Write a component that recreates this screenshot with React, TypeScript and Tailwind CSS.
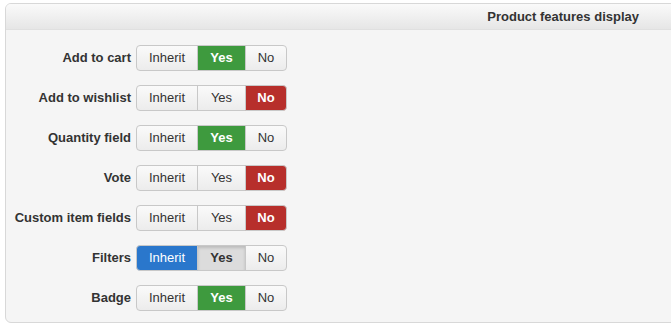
import React from "react";

type Val = "inherit" | "yes" | "no";
type Row = { label: string; active: Val; filters?: boolean };

const rows: Row[] = [
  { label: "Add to cart", active: "yes" },
  { label: "Add to wishlist", active: "no" },
  { label: "Quantity field", active: "yes" },
  { label: "Vote", active: "no" },
  { label: "Custom item fields", active: "no" },
  { label: "Filters", active: "inherit", filters: true },
  { label: "Badge", active: "yes" },
];

const base =
  "h-[26px] flex items-center justify-center text-[13px] border border-[#c8c8c8] -ml-px first:ml-0 first:rounded-l-[4px] last:rounded-r-[4px]";
const normal = "bg-gradient-to-b from-[#fafafa] to-[#ececec] text-[#333]";

function Group({ row }: { row: Row }) {
  const cls = (v: Val, w: string) => {
    if (row.active === v) {
      if (v === "yes")
        return `${base} ${w} bg-[#3e9a3e] border-[#2f7f2f] text-white font-bold relative z-10`;
      if (v === "no")
        return `${base} ${w} bg-[#b72f2b] border-[#9a2421] text-white font-bold relative z-10`;
      return `${base} ${w} bg-[#2a77cc] border-[#1f62ad] text-white relative z-10`;
    }
    if (row.filters && v === "yes")
      return `${base} ${w} bg-[#dcdcdc] text-[#333] font-bold shadow-[inset_0_2px_3px_rgba(0,0,0,0.15)] border-[#b8b8b8]`;
    return `${base} ${w} ${normal}`;
  };
  return (
    <div className="flex">
      <div className={cls("inherit", "w-[62px]")}>Inherit</div>
      <div className={cls("yes", "w-[49px]")}>Yes</div>
      <div className={cls("no", "w-[42px]")}>No</div>
    </div>
  );
}

export default function App() {
  return (
    <div
      className="w-[671px] h-[331px] bg-white overflow-hidden pt-[3px] pl-[5px]"
      style={{ fontFamily: '"Liberation Sans", Arial, sans-serif' }}
    >
      <div className="w-[700px] h-[320px] border border-[#d8d8d8] rounded-[6px] bg-[#f5f5f5] overflow-hidden">
        <div className="h-[26px] bg-gradient-to-b from-[#fafafa] to-[#e6e6e6] border-b border-[#e0e0e0] flex items-center justify-end pr-[65px]">
          <span className="text-[13px] font-bold text-[#333]">Product features display</span>
        </div>
        <div className="flex flex-col gap-[14px] pt-[15px]">
          {rows.map((r) => (
            <div key={r.label} className="flex items-center">
              <div className="w-[130px] pr-[5px] text-right text-[13px] font-bold text-[#333]">
                {r.label}
              </div>
              <Group row={r} />
            </div>
          ))}
        </div>
      </div>
    </div>
  );
}
